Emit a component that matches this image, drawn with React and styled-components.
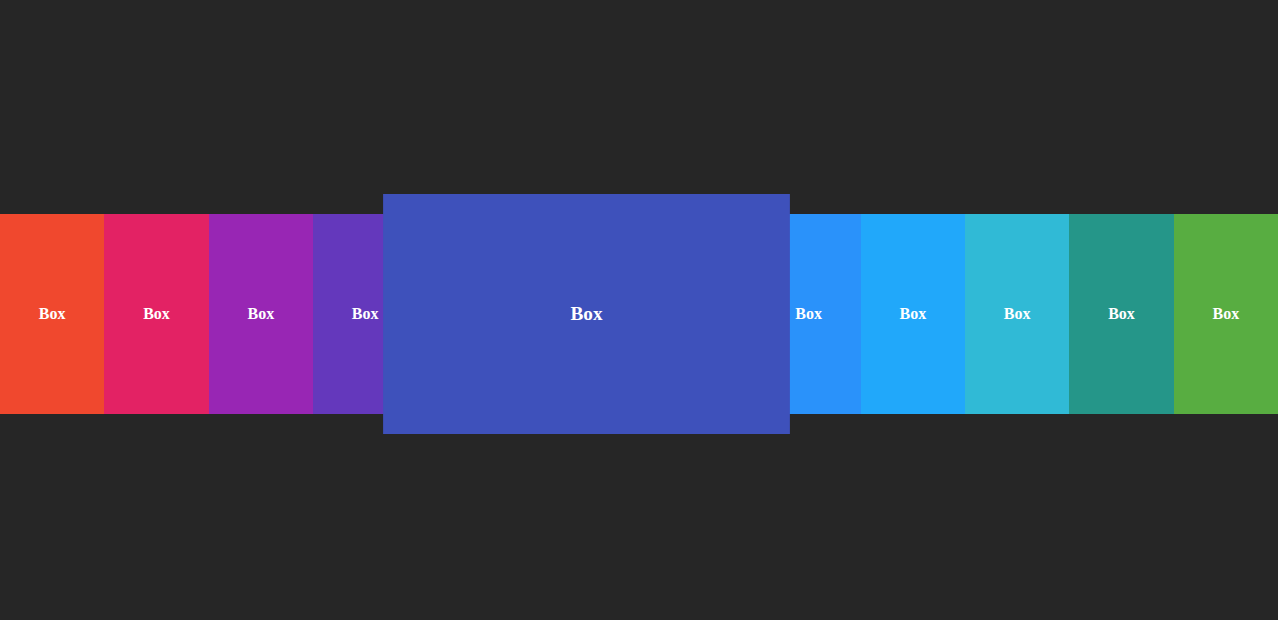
import React from 'react';
import styled, { createGlobalStyle } from 'styled-components';

const colors = [
  '#f0482e',
  '#e32264',
  '#9826b4',
  '#6438bc',
  '#3e51bb',
  '#2a92fa',
  '#21a8fa',
  '#30bad6',
  '#259689',
  '#58ad41',
];

const ACTIVE = 4;

function App() {
  return (
    <>
      <GlobalStyle />
      <Page>
        <Row>
          {colors.map((c, i) => (
            <Box key={c} $color={c} $active={i === ACTIVE}>
              Box
            </Box>
          ))}
        </Row>
      </Page>
    </>
  );
}

export default App;

//  Styled Components

const GlobalStyle = createGlobalStyle`
  html, body {
    margin: 0;
    padding: 0;
    background: #262626;
  }
`;

const Page = styled.div`
  min-height: 100vh;
  box-sizing: border-box;
  padding-top: 8px;
  display: flex;
  align-items: center;
  overflow: hidden;
`;

const Row = styled.div`
  display: flex;
  width: 100%;
  height: 200px;
`;

const Box = styled.div`
  flex: ${(p) => (p.$active ? 3.25 : 1)};
  min-width: 0;
  display: flex;
  align-items: center;
  justify-content: center;
  background-color: ${(p) => p.$color};
  color: #fff;
  font-family: "Liberation Serif", "Times New Roman", serif;
  font-weight: bold;
  font-size: 16px;
  transform: ${(p) => (p.$active ? 'scale(1.2)' : 'none')};
  z-index: ${(p) => (p.$active ? 1 : 0)};
  transition: all 0.3s;
`;
